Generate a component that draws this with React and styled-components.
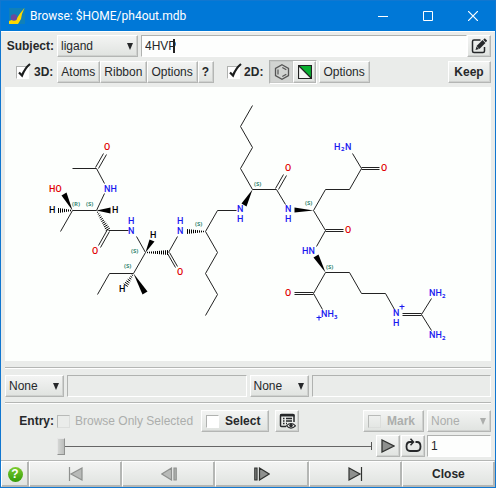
import React, { useState } from "react";
import styled, { createGlobalStyle, css } from "styled-components";

const GlobalStyle = createGlobalStyle`
  * { box-sizing: border-box; }
  body { margin: 0; background: #eaecea; }
  button, input, select { font: inherit; color: inherit; margin: 0; }
`;

const Window = styled.main`
  display: flex;
  flex-direction: column;
  min-height: 100vh;
  border: 1px solid #1177d0;
  background: #eaecea;
  color: #26282a;
  font: 12px/14px "Liberation Sans", Arial, sans-serif;
`;

const TitleBar = styled.header`
  display: flex;
  align-items: center;
  height: 30px;
  padding-left: 8px;
  background: #0078d7;
  color: #fff;
`;

const Title = styled.h1`
  flex: 1;
  margin: 0 0 0 5px;
  font: 12px/16px Roboto, "Noto Sans", sans-serif;
`;

const CaptionButton = styled.button`
  display: grid;
  place-items: center;
  width: 45px;
  height: 28px;
  padding: 0;
  border: 0;
  background: none;
`;

const Content = styled.div`
  display: flex;
  flex: 1;
  flex-direction: column;
  padding: 3px 4px;
  border-top: 1px solid #fff;
`;

const Row = styled.div`
  display: flex;
  align-items: center;
  height: 22px;
  gap: ${(p) => p.$gap || 0}px;
  margin-bottom: ${(p) => p.$below || 0}px;
`;

const ButtonGroup = styled.div`
  display: flex;
  margin-left: 3px;
`;

const Label = styled.label`
  flex: none;
  width: 49px;
  text-align: right;
  font-weight: bold;
`;

const raised = css`
  border: 1px solid;
  border-color: #fff #b4b6b4 #b4b6b4 #fff;
  box-shadow: inset -1px -1px #cfd1cf;
  background: linear-gradient(#f3f4f3, #e0e3e0);
`;

const sunken = css`
  border: 1px solid;
  border-color: #b0b2b0 #fff #fff #b0b2b0;
`;

const Button = styled.button`
  ${raised}
  display: flex;
  flex: none;
  align-items: center;
  justify-content: center;
  height: 22px;
  padding: 0 4px 0 3px;
  font-weight: ${(p) => (p.$bold ? "bold" : "normal")};
  margin-left: ${(p) => (p.$push ? "auto" : "0")};
`;

const IconButton = styled(Button)`
  width: 24px;
  padding: 0;
`;

const Keep = styled(Button)`
  width: 43px;
`;

const ToggleGroup = styled.div`
  ${sunken}
  display: flex;
  height: 24px;
  margin: 0 1px 0 5px;
`;

const ToggleButton = styled(IconButton)`
  width: 23px;
  ${(p) =>
    p["aria-pressed"] &&
    css`
      border-color: #c8cac8;
      box-shadow: none;
      background: #d2d4d2;
    `}
`;

const SelectFrame = styled.span`
  ${raised}
  display: grid;
  flex: none;
  align-items: center;
  width: ${(p) => p.$width}px;
  height: 22px;
  color: ${(p) => (p.$off ? "#acaeac" : "inherit")};

  > * { grid-area: 1 / 1; }
  > svg { justify-self: end; margin-right: 3px; pointer-events: none; }
`;

const NativeSelect = styled.select`
  appearance: none;
  width: 100%;
  height: 20px;
  padding: 0 14px 0 3px;
  border: 0;
  background: none;
  opacity: 1;
`;

const TextInput = styled.input`
  ${sunken}
  flex: ${(p) => (p.$width ? "none" : "1")};
  width: ${(p) => (p.$width ? p.$width + "px" : "auto")};
  min-width: 0;
  height: 22px;
  padding: 0 3px;
  background: #fdfefd;
  outline: none;

  &:disabled { background: #eaecea; }
`;

const SubjectField = styled.div`
  ${sunken}
  display: flex;
  flex: 1;
  align-items: center;
  height: 22px;
  margin-left: 3px;
  padding-left: 3px;
  background: #fdfefd;
`;

const SubjectInput = styled.input`
  field-sizing: content;
  padding: 0;
  border: 0;
  background: none;
  outline: none;
`;

const Caret = styled.span`
  width: 2px;
  height: 14px;
  margin-left: -3px;
  background: #222;
`;

const CheckLabel = styled.label`
  display: flex;
  flex: none;
  align-items: center;
  gap: ${(p) => p.$gap || 5}px;
  margin-left: ${(p) => p.$indent || 0}px;
  font-weight: ${(p) => (p.$bold ? "bold" : "normal")};
  color: ${(p) => (p.$off ? "#acaeac" : "inherit")};
`;

const CheckButton = styled(CheckLabel)`
  ${raised}
  height: 22px;
  padding: 0 8px 0 4px;
  margin-left: ${(p) => (p.$push ? "auto" : "5px")};
`;

const TickBox = styled.span`
  display: grid;
  width: 13px;
  height: 13px;

  > * { grid-area: 1 / 1; }
  > svg { margin: -3px -3px 0 0; overflow: visible; pointer-events: none; }
`;

const NativeCheck = styled.input`
  ${sunken}
  appearance: none;
  width: 13px;
  height: 13px;
  background: #fff;

  &:disabled { background: transparent; border-color: #b8bab8 #dcdedc #dcdedc #b8bab8; }
`;

const Canvas = styled.div`
  flex: 1;
  background: #fdfffd;

  > svg { display: block; width: 100%; height: auto; }
`;

const Rule = styled.hr`
  width: 100%;
  height: 2px;
  margin: ${(p) => p.$above}px 0 6px;
  border: 0;
  border-top: 1px solid #b4b6b4;
  border-bottom: 1px solid #fff;
`;

const Slider = styled.input`
  appearance: none;
  flex: 1;
  min-width: 0;
  height: 18px;
  margin: 0 4px 0 52px;
  background:
    linear-gradient(#555, #555) right center / 1px 8px no-repeat content-box,
    linear-gradient(#666, #666) center / 100% 1px no-repeat content-box;

  &::-webkit-slider-thumb {
    appearance: none;
    width: 8px;
    height: 17px;
    border: 1px solid;
    border-color: #e6e6e6 #909290 #909290 #e6e6e6;
    background: linear-gradient(90deg, #d4d6d4, #bcbebc);
  }
`;

const Footer = styled.footer`
  display: grid;
  grid-template-columns: 28px repeat(5, 1fr);
  height: 27px;
  border-top: 1px solid #b4b6b4;
`;

const FooterButton = styled(Button)`
  height: 26px;
  padding: 0;
  box-shadow: inset -1px -1px #b4b6b4;
`;

function Arrow() {
  return (
    <svg width="7" height="7" viewBox="0 0 7 7">
      <path d="M0 0h6L3 7z" fill="currentColor" />
    </svg>
  );
}

function Dropdown({ width, value, label, off, id }) {
  return (
    <SelectFrame $width={width} $off={off}>
      <NativeSelect id={id} aria-label={label} defaultValue={value} disabled={off}>
        <option>{value}</option>
      </NativeSelect>
      <Arrow />
    </SelectFrame>
  );
}

function Check({ initial = false, off }) {
  const [on, setOn] = useState(initial);
  return (
    <TickBox>
      <NativeCheck type="checkbox" checked={on} disabled={off} onChange={() => setOn(!on)} />
      {on && (
        <svg width="16" height="16" viewBox="0 0 16 16">
          <path d="M3 9.500L6 12.500Q9 5 14 1" fill="none" stroke="#1c1e1e" strokeWidth="2.200" />
        </svg>
      )}
    </TickBox>
  );
}

const BONDS = [
  "M72 168H96L104 183M104 193L96 210H72L60 231M108 230L128 230M136 236L145 252L133 273H109L97 294",
  "M168 252L177 236M205 231L217 252L205 273L217 294L205 315M205 231L217 210H236",
  "M252 189L240 168L252 147L240 126L252 105M252 189H276L285 204",
  "M313 210L325 189H349L361 168L352 153M313 210L325 230L316 246",
  "M325 272L313 293L322 309M325 272H349L361 293H385L394 309M421 314L431 298M421 314L431 330",
].join("");

const DOUBLES = [
  "M95 167L103 153M98 168L106 154",
  "M107 229L98 245M109 231L100 247",
  "M167 253L175 267M169 252L177 266",
  "M275 188L283 174M278 189L286 175",
  "M361 167H379M361 169H379",
  "M325 229H343M325 231H343",
  "M294 292H313M294 294H313",
  "M402 313H421M402 315H421",
].join("");

const WEDGES = [
  "72,210 61,195 66,192", "96,210 110,207 110,213", "145,252 149,239 154,241",
  "133,273 142,294 147,291", "252,189 241,203 246,206", "313,210 294,207 294,212",
  "325,272 313,257 318,254",
];

const HASHES = [
  [72, 210, 58, 210], [96, 210, 108, 230], [145, 252, 168, 252],
  [205, 231, 186, 231], [133, 273, 125, 285],
];

const ATOMS = [
  ["O", 104, 150, "o"], ["HO", 49, 192, "o"], ["NH", 104, 192, "n"],
  ["H", 49, 213, "h"], ["H", 112, 213, "h"], ["O", 92, 254, "o"],
  ["H", 128, 224, "n"], ["N", 128, 234, "n"], ["H", 150, 238, "h"],
  ["O", 177, 275, "o"], ["H", 177, 224, "n"], ["N", 177, 234, "n"],
  ["H", 119, 292, "h"], ["N", 237, 212, "n"], ["H", 237, 222, "n"],
  ["O", 285, 171, "o"], ["N", 285, 212, "n"], ["H", 285, 222, "n"],
  ["H", 334, 150, "n"], ["N", 345, 150, "n"], ["O", 381, 171, "o"],
  ["O", 345, 233, "o"], ["HN", 302, 254, "n"], ["O", 285, 296, "o"],
  ["NH", 321, 317, "n"], ["N", 393, 316, "n"], ["H", 393, 326, "n"],
  ["NH", 429, 296, "n"], ["NH", 429, 338, "n"],
];

const SUBSCRIPTS = [["2", 341, 151], ["3", 334, 319], ["2", 442, 298], ["2", 442, 340]];
const CENTRES = [
  ["R", 72, 206], ["S", 86, 206], ["S", 131, 253], ["S", 124, 268], ["S", 195, 226],
  ["S", 254, 186], ["S", 305, 205], ["S", 326, 269],
];
const INK = { o: "#e00000", n: "#1818f0", h: "#000000" };

const AtomText = styled.text`
  font: 500 9px Roboto, "Noto Sans", sans-serif;
`;
const SmallText = styled.text`
  font: bold 6px "Open Sans", "Noto Sans", sans-serif;
`;

function hashPath([x1, y1, x2, y2]) {
  const length = Math.hypot(x2 - x1, y2 - y1);
  const ux = (x2 - x1) / length;
  const uy = (y2 - y1) / length;
  let d = "";
  for (let s = 2; s <= length; s += 2) {
    const half = 0.5 + (2 * s) / length;
    const cx = x1 + ux * s;
    const cy = y1 + uy * s;
    d += `M${cx - uy * half} ${cy + ux * half}L${cx + uy * half} ${cy - ux * half}`;
  }
  return d;
}

function Molecule() {
  return (
    <svg viewBox="5 87 486 274" role="img" aria-label="4HVP structure">
      <g transform="translate(.5 .5)">
        <path d={BONDS} fill="none" stroke="#222" />
        <path d={DOUBLES} fill="none" stroke="#222" />
        {WEDGES.map((p) => <polygon key={p} points={p} fill="#000" />)}
        {HASHES.map((h) => <path key={h.join()} d={hashPath(h)} stroke="#000" />)}
        <path d="M316 317h5M318.500 315v5M399 306h5M401.500 304v5" stroke={INK.n} />
      </g>
      {ATOMS.map(([t, x, y, c]) => <AtomText key={`${x},${y}`} x={x} y={y} fill={INK[c]}>{t}</AtomText>)}
      {SUBSCRIPTS.map(([t, x, y]) => <SmallText key={`${x},${y}`} x={x} y={y} fill={INK.n}>{t}</SmallText>)}
      {CENTRES.map(([t, x, y]) => <SmallText key={`${x},${y}`} x={x} y={y} fill="#3c8c78">({t})</SmallText>)}
    </svg>
  );
}

function AppIcon() {
  return (
    <svg width="16" height="16" viewBox="0 0 16 16">
      <rect width="16" height="16" fill="#1080b8" />
      <path d="M15.500 0L11 5.500 8 10 0 13v3h9l3-5 1-5z" fill="#ffd800" />
      <circle cx="5" cy="9.500" r="3.200" fill="#6a4a9c" />
    </svg>
  );
}

function EditIcon() {
  return (
    <svg width="16" height="16" viewBox="0 0 16 16" fill="none" stroke="#26282a">
      <path d="M9.500 2H3Q1.500 2 1.500 3.500V13Q1.500 14.500 3 14.500H12Q13.500 14.500 13.500 13V9" strokeWidth="1.500" />
      <path d="M7 9.500L13 3.500" strokeWidth="4" />
      <path d="M13.500 3L15 1.500" strokeWidth="3.500" />
      <path d="M4.500 12L5.500 8.500 8 11z" fill="#26282a" stroke="none" />
    </svg>
  );
}

function RingIcon() {
  return (
    <svg width="16" height="16" viewBox="0 0 16 16" fill="none" stroke="#555">
      <path d="M8 .8L14.500 4.400V11.600L8 15.200 1.500 11.600V4.400z" strokeWidth="1.300" />
      <path d="M8.300 3.500L12.300 5.700M12.300 10.300L8.300 12.500M4 5.500V10.500" strokeWidth="1.200" />
    </svg>
  );
}

function ContrastIcon() {
  return (
    <svg width="14" height="14" viewBox="0 0 14 14">
      <rect x=".5" y=".5" width="13" height="13" fill="#f4f6f4" />
      <path d="M.5 .5H13.500V13.500z" fill="#08b030" />
      <path d="M.5 .5H13.500V13.500H.5zL13.500 13.500" fill="none" stroke="#222" strokeWidth="1.200" />
    </svg>
  );
}

function ListViewIcon() {
  return (
    <svg width="17" height="17" viewBox="0 0 17 17" fill="none" stroke="#26282a">
      <path d="M7 13.500H2.500Q1.500 13.500 1.500 12.500V2.500Q1.500 1.500 2.500 1.500H14Q15 1.500 15 2.500V9" strokeWidth="1.500" />
      <path d="M1 2.500H15.500" strokeWidth="2" />
      <path d="M4 5.500H5.500M7 5.500H13M4 8H5.500M7 8H13M4 10.500H5.500M7 10.500H8" strokeWidth="1.400" />
      <path d="M7.500 12.800Q12 8.200 16.500 12.800Q12 17.400 7.500 12.800z" fill="#f2f2f2" strokeWidth="1.200" />
      <circle cx="12" cy="12.500" r="1.800" fill="#26282a" stroke="none" />
    </svg>
  );
}

function PlayIcon() {
  return (
    <svg width="14" height="14" viewBox="0 0 14 14">
      <path d="M1 1V13L13 7z" fill="#8e908e" stroke="#303230" strokeWidth="1.300" />
    </svg>
  );
}

function LoopIcon() {
  return (
    <svg width="17" height="16" viewBox="0 0 17 16" fill="none" stroke="#26282a" strokeWidth="1.800">
      <path d="M10.500 4H12Q15.500 4 15.500 8.500T12 13H5Q1.500 13 1.500 8.500T5 4H8" />
      <path d="M5.500 .800L8.500 4 5.500 7.200" strokeWidth="1.500" />
    </svg>
  );
}

function StepIcon({ back, wide, off }) {
  return (
    <svg width="16" height="14" viewBox="0 0 16 14" fill={off ? "#b8bab8" : "#8e908e"} stroke={off ? "#8e908e" : "#303230"} strokeWidth="1.200">
      {back && !wide && <path d="M1.500 0V14M14 1V13L3 7z" />}
      {back && wide && <path d="M10.500 1V13L.8 7zM13 1H15.200V13H13z" />}
      {!back && wide && <path d="M5.500 1V13L15.200 7zM.8 1H3V13H.8z" />}
      {!back && !wide && <path d="M14.500 0V14M2 1V13L13 7z" />}
    </svg>
  );
}

const HelpMark = styled.span`
  display: grid;
  place-items: center;
  width: 15px;
  height: 15px;
  border-radius: 50%;
  background: linear-gradient(#7ccc30, #349c08);
  color: #fff;
  font-weight: bold;
`;

export default function App() {
  return (
    <>
      <GlobalStyle />
      <Window>
        <TitleBar>
          <AppIcon />
          <Title>Browse: $HOME/ph4out.mdb</Title>
          <CaptionButton aria-label="Minimize">
            <svg width="10" height="10"><path d="M0 5.500H10" stroke="#fff" /></svg>
          </CaptionButton>
          <CaptionButton aria-label="Maximize">
            <svg width="10" height="10"><path d="M.5 .5H9.500V9.500H.5z" fill="none" stroke="#fff" /></svg>
          </CaptionButton>
          <CaptionButton aria-label="Close window">
            <svg width="10" height="10"><path d="M0 0L10 10M10 0L0 10" stroke="#fff" strokeWidth="1.200" /></svg>
          </CaptionButton>
        </TitleBar>
        <Content>
          <Row $below={4}>
            <Row $gap={3}>
              <Label htmlFor="subject">Subject:</Label>
              <Dropdown width={81} value="ligand" id="subject" />
            </Row>
            <SubjectField>
              <SubjectInput aria-label="Subject name" defaultValue="4HVP" />
              <Caret />
            </SubjectField>
            <IconButton aria-label="Edit"><EditIcon /></IconButton>
          </Row>
          <Row $gap={1} $below={4}>
            <CheckLabel $bold $indent={11}><Check initial />3D:</CheckLabel>
            <ButtonGroup>
              <Button>Atoms</Button>
              <Button>Ribbon</Button>
              <Button>Options</Button>
              <Button $bold>?</Button>
            </ButtonGroup>
            <CheckLabel $bold $gap={4} $indent={12}><Check initial />2D:</CheckLabel>
            <ToggleGroup>
              <ToggleButton aria-label="Structure" aria-pressed="true"><RingIcon /></ToggleButton>
              <ToggleButton aria-label="Invert colours"><ContrastIcon /></ToggleButton>
            </ToggleGroup>
            <Button>Options</Button>
            <Keep $bold $push>Keep</Keep>
          </Row>
          <Canvas><Molecule /></Canvas>
          <Rule $above={6} />
          <Row $gap={3}>
            <Dropdown width={59} value="None" label="First field" />
            <TextInput disabled aria-label="First value" />
            <Dropdown width={59} value="None" label="Second field" />
            <TextInput disabled aria-label="Second value" />
          </Row>
          <Rule $above={5} />
          <Row $gap={3} $below={3}>
            <Label as="span">Entry:</Label>
            <CheckLabel $off><Check off />Browse Only Selected</CheckLabel>
            <CheckButton $bold $gap={6}><Check />Select</CheckButton>
            <Row $gap={3}>
              <span />
              <IconButton aria-label="View list"><ListViewIcon /></IconButton>
            </Row>
            <CheckButton $bold $gap={6} $off $push><Check off />Mark</CheckButton>
            <Dropdown width={64} value="None" label="Mark field" off />
          </Row>
          <Row>
            <Slider type="range" min="1" max="100" defaultValue="1" aria-label="Entry position" />
            <Row $gap={1}>
              <IconButton aria-label="Play"><PlayIcon /></IconButton>
              <IconButton aria-label="Loop"><LoopIcon /></IconButton>
              <span />
              <TextInput $width={64} defaultValue="1" aria-label="Entry number" />
            </Row>
          </Row>
        </Content>
        <Footer>
          <FooterButton aria-label="Help"><HelpMark>?</HelpMark></FooterButton>
          <FooterButton aria-label="First"><StepIcon back off /></FooterButton>
          <FooterButton aria-label="Previous"><StepIcon back wide off /></FooterButton>
          <FooterButton aria-label="Next"><StepIcon wide /></FooterButton>
          <FooterButton aria-label="Last"><StepIcon /></FooterButton>
          <FooterButton $bold>Close</FooterButton>
        </Footer>
      </Window>
    </>
  );
}
